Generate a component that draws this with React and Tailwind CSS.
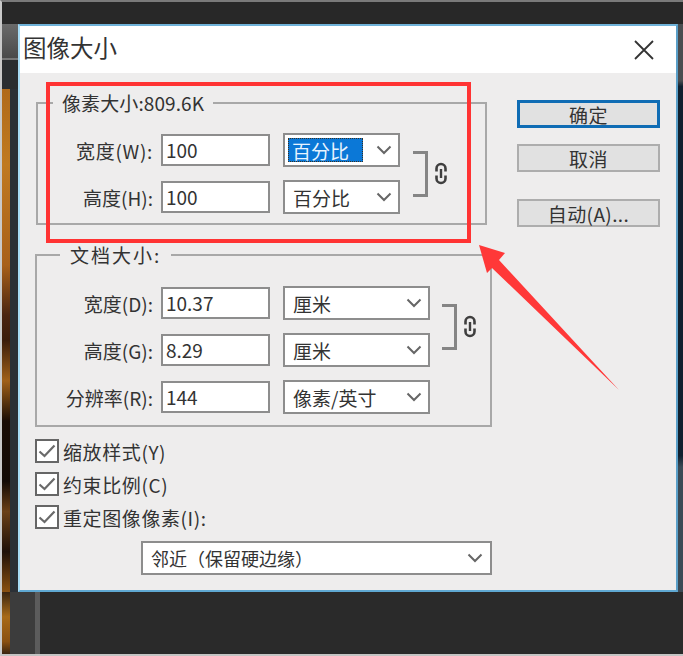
import React from 'react';

const font = { fontFamily: '"Noto Sans CJK SC", "Noto Sans", sans-serif' };

const Chevron = ({ className = '' }) => (
  <svg width="16" height="10" viewBox="0 0 16 10" fill="none" className={className}>
    <path d="M1.5 1.5 L8 8 L14.5 1.5" stroke="#666" strokeWidth="2" />
  </svg>
);

const Check = () => (
  <svg width="20" height="16" viewBox="0 0 20 16" fill="none">
    <path d="M2.5 8.5 L7.5 13 L17.5 2.5" stroke="#6a6a6a" strokeWidth="2.2" />
  </svg>
);

const ChainIcon = ({ className = '' }) => (
  <svg width="14" height="23" viewBox="0 0 14 23" fill="none" className={className}>
    <path d="M2.5 9.5 V6.5 a4.5 4.5 0 0 1 9 0 V9.5" stroke="#3f3f3f" strokeWidth="2.6" />
    <path d="M2.5 13.5 V16.5 a4.5 4.5 0 0 0 9 0 V13.5" stroke="#3f3f3f" strokeWidth="2.6" />
    <path d="M7 7 V16" stroke="#3f3f3f" strokeWidth="2.4" />
  </svg>
);

const Select = ({ value, width, active }) => (
  <div className={`${width} h-[34px] shrink-0 bg-white border-2 border-[#8d8d8d] flex items-center justify-between pr-[6px] text-[19px] text-[#333]`}>
    {active ? (
      <span className="ml-[3px] h-[24px] w-[75px] pl-[3px] bg-[#0b78d7] text-[#e8f4ff] border border-dotted border-[#3a3020] flex items-center leading-none">{value}</span>
    ) : (
      <span className="ml-[8px] leading-none">{value}</span>
    )}
    <Chevron />
  </div>
);

const Row = ({ label, labelWidth, labelClass = '', value, unit, selectWidth, active }) => (
  <div className="flex items-center">
    <span className={`${labelWidth} ${labelClass} shrink-0 text-right text-[19px] leading-none text-[#333] whitespace-nowrap`}>{label}</span>
    <div className="ml-[8px] w-[109px] h-[32px] shrink-0 bg-white border-2 border-[#8d8d8d] flex items-center pl-[3px] pb-[2px] text-[19px] leading-none text-[#333]">{value}</div>
    <div className="ml-[13px]">
      <Select value={unit} width={selectWidth} active={active} />
    </div>
  </div>
);

const Bracket = () => (
  <div className="w-[15px] h-[46px] border-t-[3px] border-r-[3px] border-b-[3px] border-[#858585]" />
);

const Btn = ({ children, primary, className = '' }) => (
  <div className={`w-[143px] h-[28px] flex items-center justify-center bg-[#e1e1e1] text-[19px] tracking-[0.4px] leading-none text-[#333] ${primary ? 'border-[3px] border-[#0f6cb4]' : 'border-2 border-[#adadad]'} ${className}`}>
    {children}
  </div>
);

const CheckRow = ({ label }) => (
  <div className="flex items-center">
    <div className="w-[24px] h-[24px] bg-white border-2 border-[#666] flex items-center justify-center"><Check /></div>
    <span className="ml-[4px] text-[19px] tracking-[0.6px] leading-none text-[#333]">{label}</span>
  </div>
);

export default function App() {
  return (
    <div style={font} className="relative w-[683px] h-[656px] overflow-hidden bg-[#2a2a2a] border-t-2 border-l-2 border-b-2 border-t-[#7a7a7a] border-l-[#c9c9c9] border-b-[#c4c4c4] flex flex-col">
      {/* top bar */}
      <div className="h-[22px] shrink-0 bg-[#282828]" />

      <div className="flex">
        {/* left edge of the app behind the dialog */}
        <div className="w-[16px] shrink-0 flex flex-col bg-[#2b3036]">
          <div className="h-[36px] bg-[linear-gradient(#6a6a6a,#4a4a4a)] border-b-2 border-[#777]" />
          <div className="h-[29px] bg-[#2a2d30]" />
          <div className="w-[8px] flex-1 bg-[linear-gradient(#b06a1a_0%,#c07a20_15%,#a8601a_35%,#4a2410_45%,#3a1c0a_50%,#a06018_58%,#1a0d05_66%,#120a05_78%,#6a4018_84%,#1e1008_92%,#8a5010_100%)]" />
        </div>

        {/* dialog */}
        <div className="w-[660px] h-[568px] shrink-0 bg-[#eeeded] border-t-2 border-b-2 border-l-2 border-r-2 border-t-[#6fb2d8] border-b-[#5fa8d2] border-l-[#a8dcf5] border-r-[#5a9fc8]">
          <div className="h-[47px] bg-white flex items-center justify-between pl-[3px] pr-[22px]">
            <span className="text-[23.5px] leading-none pb-[4px] text-[#333]">图像大小</span>
            <svg width="20" height="20" viewBox="0 0 20 20" fill="none">
              <path d="M1 1 L19 19 M19 1 L1 19" stroke="#333" strokeWidth="1.8" />
            </svg>
          </div>

          <div className="flex">
            <div className="w-[472px] shrink-0 pl-[15px] pt-[29px]">
              {/* pixel size group */}
              <div className="relative ml-px w-[451px] h-[123px] border-2 border-[#a8a8a8] pt-[29px]">
                <span className="absolute left-[15px] top-[-13px] px-[9px] bg-[#eeeded] text-[19px] tracking-[0.1px] leading-[24px] text-[#333] whitespace-nowrap">像素大小:809.6K</span>
                <div className="flex items-center">
                  <div className="flex flex-col gap-[13px]">
                    <Row label="宽度(W):" labelWidth="w-[115px]" labelClass="tracking-[0.7px]" value="100" unit="百分比" selectWidth="w-[117px]" active />
                    <Row label="高度(H):" labelWidth="w-[115px]" value="100" unit="百分比" selectWidth="w-[117px]" />
                  </div>
                  <div className="ml-[13px]"><Bracket /></div>
                  <ChainIcon className="ml-[6px]" />
                </div>
              </div>

              {/* document size group */}
              <div className="relative mt-[29px] w-[457px] h-[173px] border-2 border-[#a8a8a8] pt-[30px]">
                <span className="absolute left-[23px] top-[-13px] px-[10px] bg-[#eeeded] text-[19px] leading-[24px] tracking-[2px] text-[#333] whitespace-nowrap">文档大小:</span>
                <div className="flex items-center">
                  <div className="flex flex-col gap-[13px]">
                    <Row label="宽度(D):" labelWidth="w-[116px]" value="10.37" unit="厘米" selectWidth="w-[147px]" />
                    <Row label="高度(G):" labelWidth="w-[116px]" value="8.29" unit="厘米" selectWidth="w-[147px]" />
                  </div>
                  <div className="ml-[12px]"><Bracket /></div>
                  <ChainIcon className="ml-[6px]" />
                </div>
                <div className="mt-[13px]">
                  <Row label="分辨率(R):" labelWidth="w-[116px]" value="144" unit="像素/英寸" selectWidth="w-[147px]" />
                </div>
              </div>

              <div className="mt-[12px] flex flex-col gap-[9px]">
                <CheckRow label="缩放样式(Y)" />
                <CheckRow label="约束比例(C)" />
                <CheckRow label="重定图像像素(I):" />
              </div>

              <div className="mt-[12px] ml-[106px] w-[351px] h-[34px] bg-white border-2 border-[#8d8d8d] flex items-center justify-between pl-[8px] pr-[7px] text-[18px] leading-none text-[#333]">
                <span>邻近（保留硬边缘）</span>
                <Chevron />
              </div>
            </div>

            {/* buttons */}
            <div className="ml-[25px] pt-[27px] flex flex-col">
              <Btn primary>确定</Btn>
              <Btn className="mt-[16px]">取消</Btn>
              <Btn className="mt-[27px]">自动(A)...</Btn>
            </div>
          </div>
        </div>

        {/* right edge */}
        <div className="flex-1 bg-[linear-gradient(#4a4d50_0%,#4a4d50_10%,#10202f_11%,#10202f_76%,#3b4a55_78%,#3b4a55_100%)]" />
      </div>

      {/* below the dialog */}
      <div className="flex-1 flex">
        <div className="w-[8px] bg-[linear-gradient(#3a2410,#a86a18_40%,#8a5010_80%,#3a2410)]" />
        <div className="w-[25px] bg-[#3c3c3c]" />
        <div className="w-[5px] bg-[#5c5c5c]" />
      </div>

      {/* red annotation */}
      <div className="absolute left-[44px] top-[80px] w-[425px] h-[161px] border-[4px] border-[#ff3333]" />
      <svg className="absolute left-[-2px] top-[-2px]" width="683" height="656" viewBox="0 0 683 656">
        <polygon points="479,245 505,253 499,260 619,390 492,268 487,273" fill="#ff3838" />
      </svg>
    </div>
  );
}
